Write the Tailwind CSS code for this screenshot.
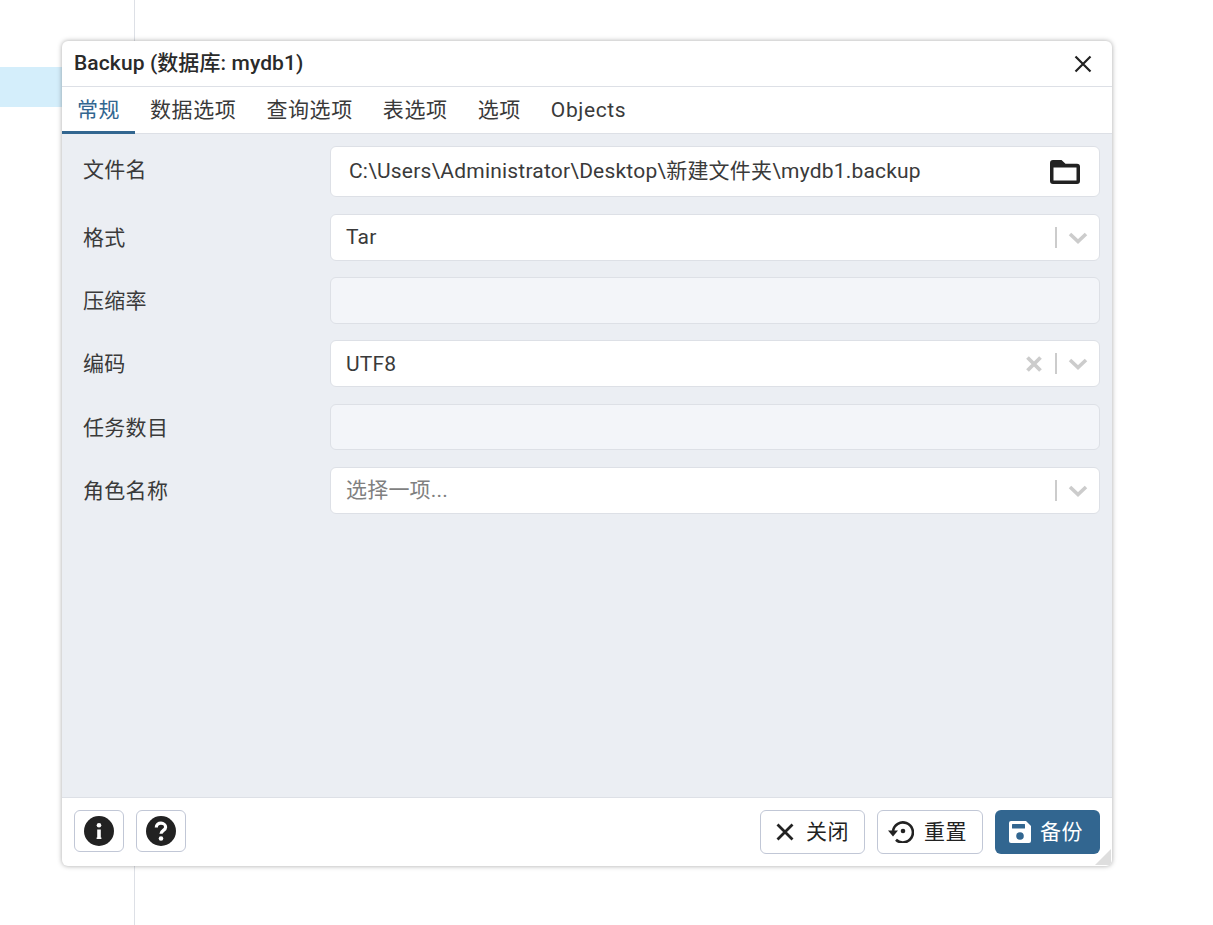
<!DOCTYPE html>
<html lang="zh"><head><meta charset="utf-8">
<script src="https://cdn.jsdelivr.net/npm/@tailwindcss/browser@4"></script>
<title>Backup</title></head>
<body class="m-0 bg-white">
<div class="relative w-[1213px] h-[925px] overflow-hidden bg-white text-[#222222] font-['Roboto','Noto_Sans_CJK_SC',sans-serif] text-[21px]">
  <div class="w-[135px] h-full border-r border-[#dde0e6] pt-[67px]"><div class="h-[40px] bg-[#d4eefb]"></div></div>
  <div class="absolute left-[62px] top-[41px] w-[1050px] h-[825px] flex flex-col bg-white rounded-md shadow-[0_0_5px_rgba(0,0,0,0.35)] overflow-hidden">
    <div class="h-[46px] shrink-0 flex items-center justify-between pl-3 pr-[19px] border-b border-[#dde0e6]">
      <span class="font-medium text-[21px] leading-none text-[#2a2a2a] tracking-[0.1px]">Backup (数据库: mydb1)</span>
      <svg width="20" height="20" viewBox="0 0 20 20" fill="none" stroke="#222222" stroke-width="2.2"><path d="M2.500 2.500 17.500 17.500M17.500 2.500 2.500 17.500"/></svg>
    </div>
    <div class="h-[47px] shrink-0 flex border-b border-[#dde0e6] text-[#3a3a3a] tracking-[0.6px]">
      <div class="w-[73px] flex items-center justify-center text-[#326690] border-b-[3px] border-[#326690] -mb-px pt-[4px]">常规</div>
      <div class="ml-[15px] flex items-center pt-[2px]">数据选项</div>
      <div class="ml-[30px] flex items-center pt-[2px]">查询选项</div>
      <div class="ml-[30px] flex items-center pt-[2px]">表选项</div>
      <div class="ml-[30px] flex items-center pt-[2px]">选项</div>
      <div class="ml-[30px] flex items-center pt-[2px]">Objects</div>
    </div>
    <div class="flex-1 bg-[#ebeef3] pl-[21px] pr-3 pt-[12px] text-[#3a3a3a]">
      <div class="flex h-[51px] mb-[17px]">
        <div class="w-[247px] pt-[9px] tracking-[0.3px]">文件名</div>
        <div class="flex-1 flex items-center justify-between bg-white rounded-md border border-[#dde0e6] pl-[18px] pr-[19px] tracking-[0.2px]">
          <span>C:\Users\Administrator\Desktop\新建文件夹\mydb1.backup</span>
          <svg width="30" height="24" viewBox="0 0 30 24"><path fill="#222222" fill-rule="evenodd" d="M3 0h8.500l4 3.700H27a3 3 0 0 1 3 3V21a3 3 0 0 1-3 3H3a3 3 0 0 1-3-3V3a3 3 0 0 1 3-3zM3.500 7.500v13h23v-13z"/></svg>
        </div>
      </div>
      <div class="flex h-[47px] mb-[16px]">
        <div class="w-[247px] flex items-center pt-[2px] tracking-[0.3px]">格式</div>
        <div class="flex-1 flex items-center bg-white rounded-md border border-[#dde0e6] pl-[15px] pr-[11px] tracking-[0.2px]">
          <span class="flex-1">Tar</span>
          <span class="w-[2px] h-[21px] bg-[#cccccc] ml-[12px]"></span>
          <svg class="ml-[11px]" width="20" height="12" viewBox="0 0 20 12" fill="none" stroke="#cccccc" stroke-width="3.6"><path d="M2 2 10 9.500 18 2"/></svg>
        </div>
      </div>
      <div class="flex h-[47px] mb-[16px]">
        <div class="w-[247px] flex items-center pt-[2px] tracking-[0.3px]">压缩率</div>
        <div class="flex-1 bg-[#f3f5f9] rounded-md border border-[#dde0e6]"></div>
      </div>
      <div class="flex h-[47px] mb-[17px]">
        <div class="w-[247px] flex items-center pt-[2px] tracking-[0.3px]">编码</div>
        <div class="flex-1 flex items-center bg-white rounded-md border border-[#dde0e6] pl-[15px] pr-[11px] tracking-[0.2px]">
          <span class="flex-1 pt-[2px]">UTF8</span>
          <svg width="16" height="16" viewBox="0 0 16 16" fill="none" stroke="#cccccc" stroke-width="3.800"><path d="M1.500 1.500 14.500 14.500M14.500 1.500 1.500 14.500"/></svg>
          <span class="w-[2px] h-[21px] bg-[#cccccc] ml-[13px]"></span>
          <svg class="ml-[11px]" width="20" height="12" viewBox="0 0 20 12" fill="none" stroke="#cccccc" stroke-width="3.6"><path d="M2 2 10 9.500 18 2"/></svg>
        </div>
      </div>
      <div class="flex h-[46px] mb-[17px]">
        <div class="w-[247px] flex items-center pt-[4px] tracking-[0.3px]">任务数目</div>
        <div class="flex-1 bg-[#f3f5f9] rounded-md border border-[#dde0e6]"></div>
      </div>
      <div class="flex h-[47px]">
        <div class="w-[247px] flex items-center pt-[2px] tracking-[0.3px]">角色名称</div>
        <div class="flex-1 flex items-center bg-white rounded-md border border-[#dde0e6] pl-[15px] pr-[11px] tracking-[0.2px]">
          <span class="flex-1 text-[#808080] pt-[1px]">选择一项...</span>
          <span class="w-[2px] h-[21px] bg-[#cccccc] ml-[12px]"></span>
          <svg class="ml-[11px]" width="20" height="12" viewBox="0 0 20 12" fill="none" stroke="#cccccc" stroke-width="3.6"><path d="M2 2 10 9.500 18 2"/></svg>
        </div>
      </div>
    </div>
    <div class="relative h-[69px] shrink-0 flex items-center border-t border-[#dde0e6] pl-3 pr-3 pb-[1px]">
      <div class="flex items-center gap-3 -mt-[2px]">
        <div class="w-[50px] h-[42px] flex items-center justify-center rounded-md border border-[#c1c7d6]">
          <svg width="30" height="30" viewBox="0 0 30 30"><circle cx="15" cy="15" r="15" fill="#222222"/><circle cx="15" cy="9.300" r="2.300" fill="#fff"/><path d="M13.200 13.500h3.600v8h.6v1.500h-4.800v-1.500h.6z" fill="#fff"/></svg>
        </div>
        <div class="w-[50px] h-[42px] flex items-center justify-center rounded-md border border-[#c1c7d6]">
          <svg width="30" height="30" viewBox="0 0 30 30"><circle cx="15" cy="15" r="15" fill="#222222"/><path d="M10.300 11.500c0-2.800 2.100-4.300 4.700-4.300s4.600 1.700 4.600 4c0 3.200-4.600 3.100-4.600 6.600" fill="none" stroke="#fff" stroke-width="3.200"/><circle cx="15" cy="22.500" r="2.300" fill="#fff"/></svg>
        </div>
      </div>
      <div class="ml-auto flex items-center text-[#222222] tracking-[0.5px]">
        <div class="w-[105px] h-[44px] flex items-center gap-[11px] pl-[14px] rounded-md border border-[#c1c7d6] bg-white">
          <svg width="20" height="20" viewBox="0 0 20 20" fill="none" stroke="#222222" stroke-width="2.800"><path d="M2.500 2.500 17.500 17.500M17.500 2.500 2.500 17.500"/></svg>
          <span class="pt-[2px]">关闭</span>
        </div>
        <div class="ml-3 w-[106px] h-[44px] flex items-center gap-[10px] pl-[10px] rounded-md border border-[#c1c7d6] bg-white">
          <svg class="-mt-[2px]" width="26" height="24" viewBox="0 0 26 24" fill="none" stroke="#222222" stroke-width="2.600"><path d="M5 12A10 10 0 1 1 8 20.700"/><path d="M0 11.500h10L5 17.500z" fill="#222222" stroke="none"/><circle cx="15" cy="12" r="2.300" fill="#222222" stroke="none"/></svg>
          <span class="pt-[2px]">重置</span>
        </div>
        <div class="ml-3 w-[105px] h-[44px] flex items-center gap-[8px] pl-[13px] rounded-md bg-[#326690] text-white">
          <svg width="24" height="24" viewBox="0 0 24 24"><path d="M3 1h15l5 5v15a2 2 0 0 1-2 2H3a2 2 0 0 1-2-2V3a2 2 0 0 1 2-2z" fill="#fff"/><rect x="4" y="4" width="13" height="4.500" rx="0.500" fill="#326690"/><circle cx="12" cy="16" r="3.800" fill="#326690"/></svg>
          <span class="pt-[2px]">备份</span>
        </div>
      </div>
      <svg class="absolute right-[1px] bottom-[1px]" width="16" height="16" viewBox="0 0 16 16"><path d="M16 0V16H0z" fill="#dedede"/></svg>
    </div>
  </div>
</div>
</body></html>
